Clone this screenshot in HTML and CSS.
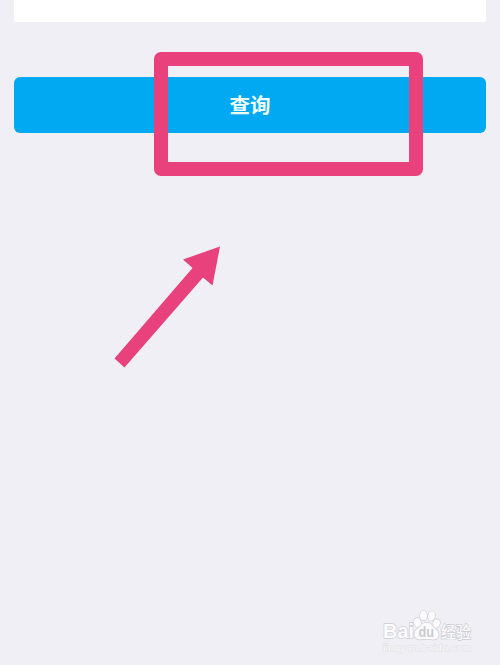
FILE: index.html
```html
<!DOCTYPE html>
<html lang="zh-CN">
<head>
<meta charset="utf-8">
<title>查询</title>
<link rel="stylesheet" href="styles.css">
</head>
<body>
<main class="page">
  <section class="panel"></section>
  <button class="query" type="button">查询</button>
  <div class="highlight"></div>
  <svg class="arrow" viewBox="0 0 140 145" aria-hidden="true">
    <path d="M120 11.5 83 24.5 92.5 33 14.5 123.500 24.500 132.500 103 42.500 112.500 50.500Z"/>
  </svg>
  <svg class="watermark" viewBox="0 0 130 65">
    <g class="mark">
      <text class="latin" x="13" y="38" textLength="31" lengthAdjust="spacingAndGlyphs">Bai</text>
      <g class="paw">
        <ellipse cx="47.500" cy="22.500" rx="3.400" ry="4.500" transform="rotate(-15 47.500 22.500)"/>
        <ellipse cx="53.500" cy="15.500" rx="3.400" ry="4.700"/>
        <ellipse cx="61.500" cy="16" rx="3.400" ry="4.700" transform="rotate(10 61.500 16)"/>
        <ellipse cx="66.500" cy="23.500" rx="3.300" ry="4.300" transform="rotate(20 66.500 23.500)"/>
        <path d="M56.500 22.500C52 22.500 51 26 48 28.500C43 31.500 43 38.500 49 39.500Q56.500 38.500 64 39.500C70 39 70 32.500 65.500 29C62 26 61.500 22.500 56.500 22.500Z"/>
      </g>
      <text class="du" x="48.500" y="37" textLength="15.500" lengthAdjust="spacingAndGlyphs">du</text>
      <text class="cjk" x="71" y="38" textLength="30" lengthAdjust="spacingAndGlyphs">经验</text>
    </g>
    <text class="url" x="13" y="51" textLength="89" lengthAdjust="spacingAndGlyphs">jingyan.baidu.com</text>
  </svg>
</main>
</body>
</html>
```
FILE: styles.css
```css
* {
  box-sizing: border-box;
}

body {
  margin: 0;
  background: #efeff5;
  font-family: "Liberation Sans", "Noto Sans CJK SC", sans-serif;
}

.page {
  position: relative;
  display: flex;
  flex-direction: column;
  gap: 55px;
  height: 665px;
  padding: 0 14px;
  overflow: hidden;
}

.panel {
  flex: none;
  height: 22px;
  background: #fff;
  border-radius: 0 0 2px 2px;
}

.query {
  flex: none;
  height: 56px;
  padding: 0 0 2px;
  border: 0;
  border-radius: 6px;
  background: #00a9f1;
  color: #f0ffff;
  font: 700 20.500px/54px "Noto Sans CJK SC", sans-serif;
}

.highlight {
  position: absolute;
  left: 154px;
  top: 52px;
  width: 269px;
  height: 124px;
  border: 14px solid #e9417b;
  border-radius: 7px;
}

.arrow {
  position: absolute;
  left: 100px;
  top: 235px;
  width: 140px;
  height: 145px;
  fill: #e9417b;
}

.watermark {
  position: absolute;
  left: 370px;
  top: 600px;
  width: 130px;
  height: 65px;
}

.mark {
  fill: #fcfcfe;
  stroke: #cdcdd1;
  stroke-width: 1.400px;
  paint-order: stroke;
}

.latin {
  font: 700 20px "Liberation Sans", sans-serif;
}

.du {
  font: 700 15px "Liberation Sans", sans-serif;
  fill: #c9c9cd;
  stroke: none;
}

.cjk {
  font: 500 15.500px "Noto Sans CJK SC", sans-serif;
}

.url {
  font: 9.500px "Liberation Sans", sans-serif;
  fill: #fafafc;
  stroke: #dedee3;
  stroke-width: 0.800px;
  paint-order: stroke;
}
```
